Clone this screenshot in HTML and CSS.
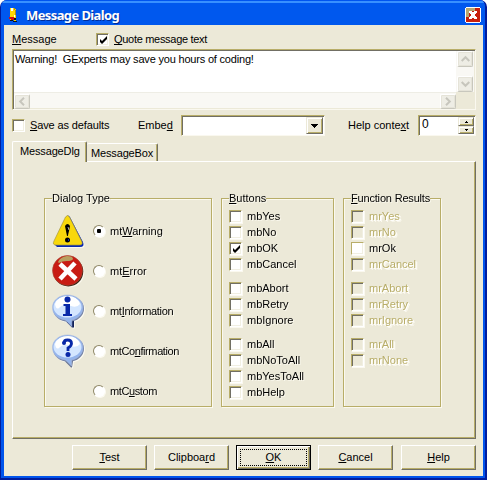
FILE: index.html
```html
<!DOCTYPE html>
<html lang="en">
<head>
<meta charset="utf-8">
<title>Message Dialog</title>
<link rel="stylesheet" href="styles.css">
</head>
<body>
<div class="window">
  <header class="titlebar">
    <svg class="app-icon" width="10" height="16" viewBox="0 0 10 16" shape-rendering="crispEdges"><path fill="#ffd800" d="M1 1h5v1h1v9H1z"/><path fill="#fff" d="M2 1h2v3H2zM5 8h1v2H5z"/><path fill="#a88a20" d="M5 1h1v2H5zM6 3h1v5H6z"/><path fill="#d01010" d="M0 10h5v2H0zM2 12h3v1H2z"/><path fill="#111" d="M1 13h3v1H1zM4 14h4v1H4zM5 11h2v2H5z"/><path fill="#ffd800" d="M1 12h1v1H1zM5 13h2v1H5z"/></svg>
    <h1 class="title">Message Dialog</h1>
    <button class="close"><svg width="16" height="16" viewBox="0 0 16 16" shape-rendering="crispEdges"><path fill="#fff" d="M1 0h14v1h1v14h-1v1H1v-1H0V1h1z"/><path fill="#c8200c" d="M1 1h14v14H1z"/><path fill="#b8a870" d="M1 1h9v3H7v2H4v4H1z"/><path fill="#fff" d="M4 4h3v1h2V4h3v2h-1v1h-1v2h1v1h1v2H9v-1H7v1H4v-2h1V9h1V7H5V6H4z"/></svg></button>
  </header>
  <main class="client">
    <div class="row message-row">
      <span class="label message-label"><u>M</u>essage</span>
      <label class="option"><span class="check"><svg width="7" height="7" viewBox="0 0 7 7"><path d="M0 2v3l2 2 5-5V-1L2 4z"/></svg></span><span class="fit-quote"><u>Q</u>uote message text</span></label>
    </div>
    <div class="memo">
      <div class="memo-text">Warning!&nbsp; GExperts may save you hours of coding!</div>
      <div class="vscroll"><i class="sb"><svg width="9" height="6" viewBox="0 0 9 6"><path d="M.7 5 4.5 1.2 8.3 5"/></svg></i><i class="sb"><svg width="9" height="6" viewBox="0 0 9 6"><path d="M.7 1 4.5 4.8 8.3 1"/></svg></i></div>
      <div class="hscroll"><i class="sb"><svg width="6" height="9" viewBox="0 0 6 9"><path d="M5 .7 1.2 4.5 5 8.3"/></svg></i><i class="sb"><svg width="6" height="9" viewBox="0 0 6 9"><path d="M1 .7 4.8 4.5 1 8.3"/></svg></i></div>
      <div class="corner"></div>
    </div>
    <div class="row settings">
      <label class="option save"><span class="check"></span><span class="fit-save"><u>S</u>ave as defaults</span></label>
      <span class="label embed">Embe<u>d</u></span>
      <div class="combo"><i class="drop"><svg width="7" height="4" viewBox="0 0 7 4" shape-rendering="crispEdges"><path d="M0 0h7v1H6v1H5v1H4v1H3V3H2V2H1V1H0z"/></svg></i></div>
      <span class="label context">Help conte<u>x</u>t</span>
      <div class="spin"><span>0</span><div class="arrows"><i><svg width="3" height="2" viewBox="0 0 3 2" shape-rendering="crispEdges"><path d="M1 0h1v1h1v1H0V1h1z"/></svg></i><i><svg width="3" height="2" viewBox="0 0 3 2" shape-rendering="crispEdges"><path d="M0 0h3v1H2v1H1V1H0z"/></svg></i></div></div>
    </div>
    <nav class="tabs"><div class="tab active">MessageDlg</div><div class="tab second">MessageBox</div></nav>
    <section class="page">
      <fieldset class="group types">
        <legend>Dialog Type</legend>
        <div class="type"><svg class="type-icon" width="32" height="32" viewBox="0 0 32 32"><path d="M14 2q2-3 4 0l13 25q2 5-3 5H5l-3-3z" fill="#0828b0"/><path d="M13.500 2q2-3 4 0l12 24q2 4-2 4H4q-4 0-2-4z" fill="#f8d80c" stroke="#a89840" stroke-width=".7"/><path d="M13 11q2.500-4 5 0l-1 5-1.200 5h-.8l-1-5z"/><circle cx="15.500" cy="25" r="2.500"/><path d="m16 12 1 3" stroke="#aaa"/><path d="M16 25h1" stroke="#0828b0" stroke-width="2"/></svg><span class="radio on"></span><span>mt<u>W</u>arning</span></div>
        <div class="type"><svg class="type-icon" width="32" height="32" viewBox="0 0 32 32"><circle cx="16.300" cy="16.500" r="15" fill="#321"/><circle cx="15.500" cy="15.500" r="15" fill="#c81c14" stroke="#a84a38" stroke-width=".6"/><path d="M6 7q2-5 9-6 6 0 6 3-1 2-6 2-5 0-8 2z" fill="#b8a060"/><path d="m8 9 16 15M23 8 8 24" stroke="#fff" stroke-width="4.600"/></svg><span class="radio"></span><span>mt<u>E</u>rror</span></div>
        <div class="type"><svg class="type-icon" width="32" height="34" viewBox="0 0 32 34"><path d="M15 27h7v6.500h-2l-6-6z" fill="#102058"/><ellipse cx="16.500" cy="14.800" rx="15.500" ry="13" fill="#707fa4"/><path d="M15.500 1C7 1 .5 6.500 .5 13.500c0 6.500 5 11.500 13 12.500l6.300 6.500V26C26 25 31 20 31 13.500 31 6.500 24 1 15.500 1z" fill="#94b4ec" stroke="#a8bbe0" stroke-width=".6"/><ellipse cx="15.500" cy="13" rx="14" ry="10.500" fill="#d4e6ff"/><path d="M3 10q3-8 13-8 9 0 12 8-3 4-9 2-8-3-12 2-3 2-4-4z" fill="#fff"/><circle cx="15.500" cy="5.500" r="3" fill="#0828a8"/><path d="M11.500 10H18v10h2v2h-9v-2h2.500v-8h-2z" fill="#0828a8"/></svg><span class="radio"></span><span class="fit-info">mt<u>I</u>nformation</span></div>
        <div class="type"><svg class="type-icon" width="32" height="34" viewBox="0 0 32 34"><path d="M14 27h7l-1 6.500h-1l-6-6z" fill="#687490"/><ellipse cx="16.500" cy="14.800" rx="15.500" ry="13" fill="#707fa4"/><path d="M15.500 1C7 1 .5 6.500 .5 13.500c0 6.500 5 11.500 13 12.500l6 6V26C26 25 31 20 31 13.500 31 6.500 24 1 15.500 1z" fill="#94b4ec" stroke="#a8bbe0" stroke-width=".6"/><ellipse cx="15.500" cy="13" rx="14" ry="10.500" fill="#d4e6ff"/><path d="M3 10q3-8 13-8 9 0 12 8-3 4-9 2-8-3-12 2-3 2-4-4z" fill="#fff"/><path d="M12 9Q12 6 15.500 6 19.500 6 19.500 9.500 19.500 12 16 14v3" fill="none" stroke="#0828a8" stroke-width="2.800"/><circle cx="12" cy="9" r="2" fill="#0828a8"/><circle cx="16" cy="20.500" r="2.500" fill="#0828a8"/></svg><span class="radio"></span><span class="fit-confirm">mtCo<u>n</u>firmation</span></div>
        <div class="type"><span class="type-icon"></span><span class="radio"></span><span class="fit-custom">mtC<u>u</u>stom</span></div>
      </fieldset>
      <fieldset class="group choices">
        <legend><u>B</u>uttons</legend>
        <div class="list">
        <label class="option"><span class="check"></span>mbYes</label>
        <label class="option"><span class="check"></span>mbNo</label>
        <label class="option"><span class="check"><svg width="7" height="7" viewBox="0 0 7 7"><path d="M0 2v3l2 2 5-5V-1L2 4z"/></svg></span>mbOK</label>
        <label class="option"><span class="check"></span>mbCancel</label>
        <label class="option gap"><span class="check"></span>mbAbort</label>
        <label class="option"><span class="check"></span>mbRetry</label>
        <label class="option"><span class="check"></span>mbIgnore</label>
        <label class="option gap"><span class="check"></span>mbAll</label>
        <label class="option"><span class="check"></span>mbNoToAll</label>
        <label class="option"><span class="check"></span>mbYesToAll</label>
        <label class="option"><span class="check"></span>mbHelp</label>
        </div>
      </fieldset>
      <fieldset class="group results">
        <legend class="fit-results"><u>F</u>unction Results</legend>
        <div class="list">
        <label class="option disabled"><span class="check"></span>mrYes</label>
        <label class="option disabled"><span class="check"></span>mrNo</label>
        <label class="option"><span class="check flat"></span>mrOk</label>
        <label class="option disabled"><span class="check"></span>mrCancel</label>
        <label class="option disabled gap"><span class="check"></span>mrAbort</label>
        <label class="option disabled"><span class="check"></span>mrRetry</label>
        <label class="option disabled"><span class="check"></span>mrIgnore</label>
        <label class="option disabled gap"><span class="check"></span>mrAll</label>
        <label class="option disabled"><span class="check"></span>mrNone</label>
        </div>
      </fieldset>
    </section>
    <footer class="actions">
      <button class="btn"><span><u>T</u>est</span></button>
      <button class="btn"><span>Clipboa<u>r</u>d</span></button>
      <button class="btn default"><span><u>O</u>K</span></button>
      <button class="btn"><span><u>C</u>ancel</span></button>
      <button class="btn last"><span><u>H</u>elp</span></button>
    </footer>
  </main>
</div>
</body>
</html>
```
FILE: styles.css
```css
* { box-sizing: border-box; }
body { margin: 0; width: 487px; height: 480px; overflow: hidden; background: #fff; font: 11px/13px "Liberation Sans", Arial, sans-serif; color: #000; }
button { font: inherit; color: inherit; padding: 0; border: 0; }
svg { display: block; overflow: visible; }
u { text-decoration: underline; text-decoration-thickness: 1px; text-underline-offset: 1px; text-decoration-skip-ink: none; }
.window { width: 487px; height: 480px; display: grid; grid-template-rows: 25px 1fr; background: #0054ec; border: solid #001c9c; border-width: 0 2px 2px 1px; border-radius: 7px 7px 0 0; overflow: hidden; }
.titlebar { display: flex; align-items: center; padding: 4px 4px 0 8px; background: linear-gradient(#0054f0 0 1px, #3890ff 1px 3px, #0058ee 3px); }
.app-icon { margin-right: 7px; }
.title { margin: 0; font: bold 13px/16px "Noto Sans", sans-serif; width: 100px; white-space: nowrap; letter-spacing: -.6px; color: #fff; text-shadow: 1px 1px #002c98; }
.close { margin-left: auto; width: 16px; height: 16px; background: none; }
.client { margin: 0 2px 2px 3px; background: #ece9d8; padding: 8px 7px 0 8px; display: flex; flex-direction: column; }
.row { display: flex; align-items: center; }
.message-row { height: 13px; }
.message-label { width: 84px; }
.option { display: flex; align-items: center; gap: 5px; height: 16px; white-space: nowrap; }
.check { width: 13px; height: 13px; flex: none; border: 1px solid; border-color: #b8ad68 #fff #fff #b8ad68; background: #fff; box-shadow: inset 1px 1px #716f64, inset -1px -1px #f1efe2; padding: 3px 0 0 3px; }
.flat { box-shadow: inset -1px -1px #f1efe2; }
.fit-quote { letter-spacing: -.3px; }
.fit-save { letter-spacing: -.12px; }
.fit-info { letter-spacing: -.3px; }
.fit-confirm { letter-spacing: -.4px; }
.fit-custom { letter-spacing: -.4px; }
.fit-results { letter-spacing: -.18px; }
.memo { margin-top: 3px; height: 61px; width: 464px; border: 1px solid; border-color: #b8ad68 #faf8ef #faf8ef #b8ad68; box-shadow: inset 1px 1px #716f64; display: grid; grid-template: 41px 16px / 442px 18px; padding: 1px; background: #ece9d8; }
.memo-text { background: #fff; padding: 2px 0 0 1px; white-space: pre; letter-spacing: -.19px; }
.vscroll, .hscroll { background: #f9f8f4; display: flex; justify-content: space-between; }
.vscroll { flex-direction: column; padding-left: 1px; }
.hscroll { padding-top: 1px; border-top: 1px solid #eeede5; }
.sb { width: 16px; height: 16px; flex: none; display: grid; place-items: center; border: 1px solid #fff; border-right-color: #c8c7bd; border-bottom-color: #c8c7bd; border-radius: 2px; background: #eeede5; box-shadow: inset 0 0 0 1px #e5e3d8; }
.hscroll .sb { height: 15px; }
.sb path { stroke: #c7c6bd; stroke-width: 2; fill: none; }
.settings { margin-top: 5px; height: 21px; }
.save { width: 126px; }
.embed { width: 43px; }
.combo, .spin { height: 21px; border: 1px solid; border-color: #b8ad68 #faf8ef #faf8ef #b8ad68; background: #fff; box-shadow: inset 1px 1px #716f64; display: flex; padding: 1px; }
.combo { width: 144px; justify-content: flex-end; }
.drop, .arrows i { display: grid; place-items: center; background: #ece9d8; border: 1px solid; border-color: #ece9d8 #716f64 #716f64 #ece9d8; box-shadow: inset 1px 1px #fff, inset -1px -1px #b8ad68; }
.drop { width: 17px; }
.context { width: 70px; margin-left: 23px; }
.spin { width: 58px; justify-content: space-between; padding-left: 3px; font-size: 12px; line-height: 15px; }
.arrows { width: 16px; display: grid; grid-template-rows: 9px 8px; }
.tabs { height: 20px; margin-top: 5px; display: flex; align-items: flex-end; position: relative; z-index: 1; letter-spacing: -.15px; }
.tab { border: solid; border-width: 1px 1px 0; border-color: #fff #716f64 #fff #fff; border-radius: 2px 2px 0 0; box-shadow: inset -1px 0 #b8ad68; background: #ece9d8; }
.active { width: 75px; height: 21px; padding: 3px 0 0 7px; margin-bottom: -1px; }
.second { width: 71px; height: 18px; padding: 3px 0 0 4px; border-left: 0; }
.page { width: 464px; height: 278px; border: 1px solid; border-color: #fff #716f64 #716f64 #fff; box-shadow: inset -1px -1px #b8ad68; padding: 29px 0 0 31px; display: flex; align-items: flex-start; gap: 9px; }
.group { margin: 0; padding: 0 7px; min-width: 0; height: 216px; border: 1px solid #b8ad68; filter: drop-shadow(1px 1px 0 #fbf9ef); }
legend { padding: 1px 0 0; height: 14px; white-space: nowrap; }
.types { width: 168px; }
.choices { width: 113px; }
.results { width: 98px; }
.list { padding-top: 3px; }
.type { height: 40px; display: flex; align-items: center; white-space: nowrap; }
.type-icon { width: 32px; margin-right: 9px; flex: none; }
.types .type:nth-of-type(1) { margin-top: 6px; }
.radio { width: 12px; height: 12px; flex: none; border-radius: 50%; border: 1px solid; border-color: #8e8766 #fff #fff #8e8766; background: #fff; margin-right: 5px; display: grid; place-items: center; }
.on::after { content: ""; width: 4px; height: 4px; border-radius: 1px; background: #000; }
.gap { margin-top: 8px; }
.disabled { color: #b8ad68; text-shadow: 1px 1px #fff; }
.disabled .check { background: #ece9d8; }
.actions { margin: 6px 0 0 60px; display: flex; gap: 7px; }
.btn { width: 75px; height: 25px; flex: none; background: #ece9d8; border: 1px solid; border-color: #fff #716f64 #716f64 #fff; box-shadow: inset -1px -1px #b8ad68; display: grid; place-items: center; }
.last { margin-left: 1px; }
.default { border-color: #000; box-shadow: inset 1px 1px #fff, inset -1px -1px #716f64, inset -2px -2px #b8ad68; }
.default span { width: 67px; height: 17px; line-height: 15px; border: 1px dotted #000; }
```
